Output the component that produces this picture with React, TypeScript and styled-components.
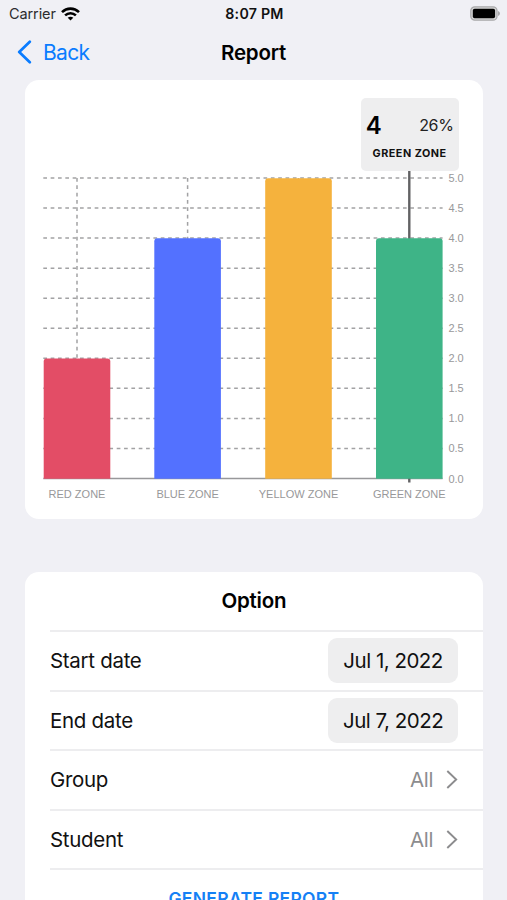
import React from "react";
import styled, { createGlobalStyle } from "styled-components";

const GlobalStyle = createGlobalStyle`
  * { box-sizing: border-box; }
  html, body { margin: 0; padding: 0; background: #f0f0f5; }
  body { font-family: Inter, "Liberation Sans", sans-serif; color: #000; }
`;

const Screen = styled.div`
  width: 507px;
  height: 900px;
  overflow: hidden;
  background: #f0f0f5;
  display: flex;
  flex-direction: column;
`;

const StatusBar = styled.header`
  height: 27px;
  flex: none;
  display: grid;
  grid-template-columns: 1fr auto 1fr;
  align-items: center;
  padding: 0 7px 0 9px;
`;

const Carrier = styled.div`
  display: flex;
  align-items: center;
  gap: 5px;
  font-size: 14.5px;
  letter-spacing: -0.1px;
  color: #2c2c2e;
`;

const Clock = styled.div`
  font-size: 14.2px;
  font-weight: 600;
  letter-spacing: 0.25px;
  color: #111;
`;

const BatterySlot = styled.div`
  display: flex;
  justify-content: flex-end;
`;

const NavBar = styled.nav`
  height: 52.5px;
  flex: none;
  display: grid;
  grid-template-columns: 1fr auto 1fr;
  align-items: center;
  padding: 0 17px 2px;
`;

const BackButton = styled.button`
  display: flex;
  align-items: center;
  justify-self: start;
  gap: 11px;
  padding: 0;
  border: 0;
  background: none;
  font: inherit;
  font-size: 21px;
  letter-spacing: -0.7px;
  color: #0a7cff;
`;

const Title = styled.h1`
  margin: 0;
  font-size: 20.5px;
  font-weight: 600;
  letter-spacing: -0.2px;
`;

const Card = styled.section`
  flex: none;
  width: 457.5px;
  margin-left: 25.2px;
  background: #fff;
  border-radius: 14px;
`;

const ChartCard = styled(Card)`
  position: relative;
  height: 439.5px;
  margin-bottom: 52.5px;
`;

const ChartSvg = styled.svg`
  display: block;
  overflow: visible;
`;

const AxisLabel = styled.text`
  font-family: "Liberation Sans", Arial, sans-serif;
  font-size: 11px;
  fill: #98989a;
`;

const Tooltip = styled.div`
  position: absolute;
  left: 335.6px;
  top: 18px;
  width: 98.2px;
  height: 73px;
  padding: 12px 5.5px 0 5px;
  border-radius: 5px;
  background: #eeeeef;
`;

const TooltipRow = styled.div`
  display: flex;
  align-items: center;
  justify-content: space-between;
  height: 31px;
`;

const TooltipCount = styled.span`
  font-size: 24px;
  font-weight: 600;
`;

const TooltipPercent = styled.span`
  font-size: 16px;
  letter-spacing: -0.4px;
  color: #222;
`;

const TooltipName = styled.div`
  padding-top: 6px;
  text-align: center;
  font-size: 10.8px;
  line-height: 13px;
  font-weight: 700;
  letter-spacing: 0.5px;
  color: #111;
`;

const OptionCard = styled(Card)`
  height: 400px;
  padding-left: 24.8px;
`;

const OptionTitle = styled.h2`
  margin: 0 0 0 -24.8px;
  height: 58.5px;
  display: flex;
  align-items: center;
  justify-content: center;
  font-size: 20.5px;
  font-weight: 600;
  letter-spacing: -0.2px;
`;

const OptionRow = styled.div`
  height: 59.5px;
  display: flex;
  align-items: center;
  justify-content: space-between;
  padding-right: 24.6px;
  border-top: 2px solid #ededef;
  font-size: 20.5px;
  letter-spacing: -0.3px;
  color: #111;
`;

const DateButton = styled.button`
  width: 130px;
  height: 45px;
  padding: 0;
  border: 0;
  border-radius: 9px;
  background: #eeeeef;
  color: #111;
  font: inherit;
  letter-spacing: -0.5px;
`;

const Choice = styled.div`
  display: flex;
  align-items: center;
  gap: 13px;
  color: #8c8c8e;
`;

const GenerateButton = styled.button`
  width: 100%;
  height: 59px;
  padding: 0 24.8px 0 0;
  border: 0;
  border-top: 2px solid #ededef;
  background: none;
  font: inherit;
  font-size: 17.5px;
  font-weight: 600;
  letter-spacing: 0.3px;
  color: #1580f5;
`;

const PLOT = { left: 18.3, right: 417.6, top: 98.5, bottom: 399 };
const MAX = 5;
const BAR_WIDTH = 66.6;
const DASH = "3.7 3.64";

const zones = [
  { name: "RED ZONE", value: 2, color: "#e34d66", center: 52 },
  { name: "BLUE ZONE", value: 4, color: "#5371ff", center: 162.6 },
  { name: "YELLOW ZONE", value: 5, color: "#f5b23d", center: 273.5 },
  { name: "GREEN ZONE", value: 4, color: "#3eb487", center: 384.3 },
];

const ticks = Array.from({ length: 11 }, (_, i) => i * 0.5);
const yOf = (v: number) => PLOT.bottom - (v / MAX) * (PLOT.bottom - PLOT.top);

function barPath(center: number, value: number) {
  const l = center - BAR_WIDTH / 2;
  const r = center + BAR_WIDTH / 2;
  const t = yOf(value) + 0.2;
  return `M${l} ${PLOT.bottom + 0.3}V${t + 3}Q${l} ${t} ${l + 3} ${t}H${r - 3}Q${r} ${t} ${r} ${t + 3}V${PLOT.bottom + 0.3}Z`;
}

function BarChart() {
  return (
    <ChartSvg width="457.5" height="439.5" viewBox="0 0.5 457.5 439.5">
      <g stroke="#a2a2a4" strokeWidth="1.5" strokeDasharray={DASH}>
        {ticks.slice(1).map((t) => (
          <line key={t} x1={PLOT.left} x2={PLOT.right} y1={yOf(t)} y2={yOf(t)} />
        ))}
        {zones.slice(0, 3).map((z) => (
          <line key={z.name} x1={z.center} x2={z.center} y1={PLOT.top} y2={PLOT.bottom} />
        ))}
      </g>
      <line x1={PLOT.left} x2={PLOT.right} y1={PLOT.bottom} y2={PLOT.bottom} stroke="#98989a" strokeWidth="1.4" />
      <line x1="384.3" x2="384.3" y1="91" y2="403" stroke="#626264" strokeWidth="2.4" />
      {zones.map((z) => (
        <path key={z.name} d={barPath(z.center, z.value)} fill={z.color} />
      ))}
      {ticks.map((t) => (
        <AxisLabel key={t} x="423.4" y={yOf(t) + 4}>{t.toFixed(1)}</AxisLabel>
      ))}
      {zones.map((z) => (
        <AxisLabel key={z.name} x={z.center} y="418.8" textAnchor="middle">{z.name}</AxisLabel>
      ))}
    </ChartSvg>
  );
}

function WifiIcon() {
  return (
    <svg width="19" height="14" viewBox="0 0 19 14" fill="none" stroke="#000" strokeWidth="2.6">
      <path d="M1 5.1C5.8 .5 13.2 .5 18 5.1" />
      <path d="M4.1 8.4C7.2 5.5 11.8 5.5 14.9 8.4" />
      <path d="M9.5 13.6L6.7 10.8C8.2 9.3 10.8 9.3 12.3 10.8Z" fill="#000" stroke="none" />
    </svg>
  );
}

function BatteryIcon() {
  return (
    <svg width="31" height="16" viewBox="-0.8 0.3 31 16">
      <rect x="1" y="1.1" width="26.2" height="13.4" rx="4" fill="#d6d6d6" stroke="#a9a9ab" strokeWidth="1.3" />
      <rect x="3" y="3.1" width="22.3" height="9.4" rx="1.8" fill="#000" />
      <path d="M28.2 5.2Q30.2 6 30.2 7.8T28.2 10.4Z" fill="#a9a9ab" />
    </svg>
  );
}

function BackIcon() {
  return (
    <svg width="15" height="24" viewBox="0 0 15 24" fill="none" stroke="#0a7cff" strokeWidth="2.7" strokeLinecap="round" strokeLinejoin="round">
      <path d="M12.8 1.7L2.2 12L12.8 22.3" />
    </svg>
  );
}

function Chevron() {
  return (
    <svg width="12" height="19" viewBox="0 0 12 19" fill="none" stroke="#8c8c8e" strokeWidth="1.9">
      <path d="M1.3 1L10.2 9.5L1.3 18" />
    </svg>
  );
}

export default function App() {
  return (
    <Screen>
      <GlobalStyle />
      <StatusBar>
        <Carrier>Carrier<WifiIcon /></Carrier>
        <Clock>8:07 PM</Clock>
        <BatterySlot><BatteryIcon /></BatterySlot>
      </StatusBar>
      <NavBar>
        <BackButton><BackIcon />Back</BackButton>
        <Title>Report</Title>
      </NavBar>
      <ChartCard>
        <BarChart />
        <Tooltip>
          <TooltipRow>
            <TooltipCount>4</TooltipCount>
            <TooltipPercent>26%</TooltipPercent>
          </TooltipRow>
          <TooltipName>GREEN ZONE</TooltipName>
        </Tooltip>
      </ChartCard>
      <OptionCard>
        <OptionTitle>Option</OptionTitle>
        <OptionRow>Start date<DateButton>Jul 1, 2022</DateButton></OptionRow>
        <OptionRow>End date<DateButton>Jul 7, 2022</DateButton></OptionRow>
        <OptionRow>Group<Choice>All<Chevron /></Choice></OptionRow>
        <OptionRow>Student<Choice>All<Chevron /></Choice></OptionRow>
        <GenerateButton>GENERATE REPORT</GenerateButton>
      </OptionCard>
    </Screen>
  );
}
